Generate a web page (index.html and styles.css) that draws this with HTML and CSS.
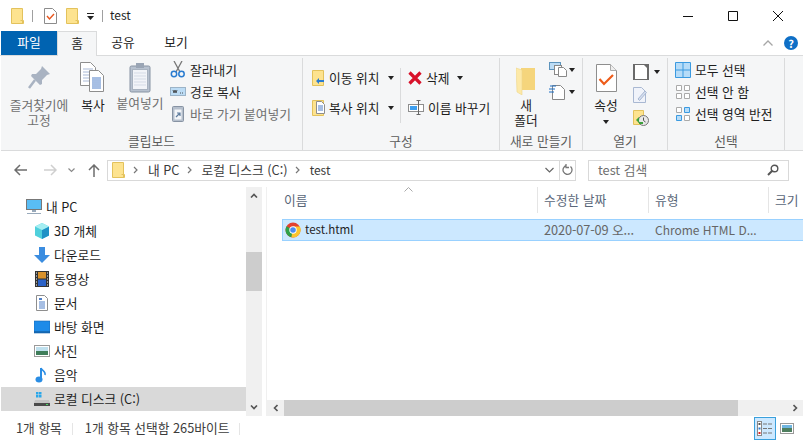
FILE: index.html
```html
<!DOCTYPE html>
<html lang="ko">
<head>
<meta charset="utf-8">
<title>test</title>
<link rel="stylesheet" href="styles.css">
</head>
<body>
<svg class="defs" width="0" height="0" aria-hidden="true">
  <defs>
    <symbol id="folder" viewBox="0 0 13 16"><path d="M.5.5h11v12h1v3H.5z" fill="#fde38f" stroke="#e3c25c"/><path d="M9.500 12.500h2v3" fill="none" stroke="#e3c25c"/></symbol>
  </defs>
</svg>
<div class="window">
  <header class="titlebar">
    <svg class="qa-folder" width="13" height="16"><use href="#folder"/></svg>
    <span class="qa-sep"></span>
    <svg class="qa-check" width="13" height="16" viewBox="0 0 13 16"><path d="M.5.5h8l4 4v11H.5z" fill="#fff" stroke="#8c8c8c"/><path d="M3 8l2.500 3L10 6" fill="none" stroke="#e8551c" stroke-width="1.400"/></svg>
    <svg class="qa-folder2" width="13" height="16"><use href="#folder"/></svg>
    <svg class="qa-drop" width="7" height="8" viewBox="0 0 7 8"><path d="M0 0h7v1H0zM0 3h7L3.500 7z" fill="#222"/></svg>
    <span class="qa-sep qa-sep2"></span>
    <span class="title-text">test</span>
    <div class="winctl">
      <svg width="12" height="12" viewBox="0 0 12 12"><path d="M1 6.500h10" stroke="#111" fill="none"/></svg>
      <svg width="12" height="12" viewBox="0 0 12 12"><path d="M1.500 1.500h9v9h-9z" stroke="#111" fill="none"/></svg>
      <svg width="12" height="12" viewBox="0 0 12 12"><path d="M1 1l10 10M11 1L1 11" stroke="#111" fill="none"/></svg>
    </div>
  </header>

  <nav class="tabs">
    <span class="tab tab-file">파일</span>
    <span class="tab tab-home">홈</span>
    <span class="tab tab-share">공유</span>
    <span class="tab tab-view">보기</span>
    <svg class="collapse" width="10" height="6" viewBox="0 0 10 6"><path d="M.5 5.500L5 1l4.500 4.500" fill="none" stroke="#a6a6a6" stroke-width="1.300"/></svg>
    <span class="help">?</span>
  </nav>

  <section class="ribbon">
    <div class="group g-clip">
      <div class="group-body">
        <div class="big b-pin">
          <svg width="26" height="34" viewBox="0 0 26 34"><path d="M16 7l8 8-3 1-5 5 0 4-2 1-9-9 1-2 4 0 5-5z" fill="#a9b3c2"/><path d="M9 21L3 29" stroke="#a9b3c2" stroke-width="2.500"/></svg>
          <span class="dim">즐겨찾기에<br>고정</span>
        </div>
        <div class="big b-copy">
          <svg width="26" height="34" viewBox="0 0 26 34"><path d="M.5 3.500h10l5 5v18H.5z" fill="#fff" stroke="#8e8e8e"/><path d="M3 10h10M3 13h10M3 16h10M3 19h10M3 22h10" stroke="#a9b9d6"/><path d="M9.500 11.500h9l5 5v16h-14z" fill="#fff" stroke="#8e8e8e"/><path d="M12 19h9M12 21h9M12 23h9M12 25h9M12 27h9M12 29h9" stroke="#4f7fc8"/></svg>
          <span>복사</span>
        </div>
        <div class="big b-paste">
          <svg width="22" height="32" viewBox="0 0 22 32"><rect x="1" y="5" width="20" height="26" rx="1.500" fill="#b7c1cf" stroke="#8793a3"/><rect x="3.500" y="8.500" width="15" height="20" fill="#f2f4f8" stroke="#a9b3c0"/><path d="M5 12h12M5 15h12M5 18h12M5 21h12M5 24h12" stroke="#d5dbe6"/><rect x="7" y="2" width="8" height="5" fill="#9aa5b5"/></svg>
          <span class="dim">붙여넣기</span>
        </div>
        <div class="small-col">
          <div class="small">
            <svg width="16" height="17" viewBox="0 0 16 17"><path d="M4 0l6 11M12 0L6 11" stroke="#777" stroke-width="1.300"/><circle cx="4" cy="13" r="2.700" fill="none" stroke="#2a7cd0" stroke-width="1.500"/><circle cx="11.500" cy="13" r="2.700" fill="none" stroke="#2a7cd0" stroke-width="1.500"/></svg>
            <span>잘라내기</span>
          </div>
          <div class="small">
            <svg width="16" height="17" viewBox="0 0 16 17"><rect x=".5" y="4.500" width="15" height="8" fill="#bcdcf5" stroke="#9cb4c8"/><path d="M3 7l1 3 1-3 1 3 1-3M10 10h1M12 10h1" stroke="#333" fill="none" stroke-width=".8"/></svg>
            <span>경로 복사</span>
          </div>
          <div class="small">
            <svg width="16" height="17" viewBox="0 0 16 17"><rect x="2.500" y="1.500" width="11" height="15" rx="1" fill="#b5bfcc" stroke="#8793a3"/><rect x="4.500" y="4.500" width="7" height="10" fill="#f3f5f8"/><path d="M6 12l4-4M7 8h3v3" stroke="#5f7d9e" fill="none" stroke-width="1.200"/></svg>
            <span class="dim">바로 가기 붙여넣기</span>
          </div>
        </div>
      </div>
      <div class="group-label">클립보드</div>
    </div>

    <div class="group g-org">
      <div class="group-body">
        <div class="org-col">
          <div class="small">
            <svg width="13" height="16" viewBox="0 0 13 16"><path d="M.5.500h11v15H.5z" fill="#fde38f" stroke="#e3c25c"/><path d="M4 11l3-3v2h5v2H7v2z" fill="#2a7cd0"/></svg>
            <span>이동 위치</span><i class="caret"></i>
          </div>
          <div class="small">
            <svg width="13" height="16" viewBox="0 0 13 16"><path d="M.5.500h11v15H.5z" fill="#fde38f" stroke="#e3c25c"/><path d="M4.500 1.500h5l3 3v9h-8z" fill="#fff" stroke="#8e8e8e"/><path d="M6 6h5M6 8h5M6 10h5" stroke="#4f7fc8"/></svg>
            <span>복사 위치</span><i class="caret"></i>
          </div>
        </div>
        <span class="org-sep"></span>
        <div class="org-col org-col2">
          <div class="small">
            <svg width="14" height="14" viewBox="0 0 14 14"><path d="M1.500 1.500l11 11M12.500 1.500l-11 11" stroke="#d8112a" stroke-width="3.200"/></svg>
            <span>삭제</span><i class="caret"></i>
          </div>
          <div class="small">
            <svg width="16" height="16" viewBox="0 0 16 16"><rect x=".5" y="4.500" width="15" height="7" fill="#fff" stroke="#8e8e8e"/><rect x="2" y="6" width="7" height="4" fill="#3e9ff0"/><path d="M10.500 0v15M8.500.5h4M8.500 14.500h4" stroke="#666" fill="none"/></svg>
            <span>이름 바꾸기</span>
          </div>
        </div>
      </div>
      <div class="group-label">구성</div>
    </div>

    <div class="group g-new">
      <div class="group-body">
        <div class="big b-new">
          <svg width="20" height="28" viewBox="0 0 20 28"><path d="M5 1h14v22H5z" fill="#f5d57c"/><path d="M0 1l6 2v25l-5-3z" fill="#fde9a8" stroke="#efd68b" stroke-width=".6"/></svg>
          <span>새<br>폴더</span>
        </div>
        <div class="new-col">
          <div class="icon-caret">
            <svg width="19" height="15" viewBox="0 0 19 15"><rect x=".5" y=".5" width="11" height="7" fill="#bcdcf5" stroke="#5c93bc"/><rect x="5.500" y="3.500" width="7" height="9" fill="#fff" stroke="#888"/><path d="M9.500 5.500h5l3 3v6h-8z" fill="#fff" stroke="#888"/></svg>
            <i class="caret"></i>
          </div>
          <div class="icon-caret">
            <svg width="19" height="16" viewBox="0 0 19 16"><path d="M3.500 1.500h8l4 4v10h-12z" fill="#fff" stroke="#888"/><path d="M1 2h6M0 5h6M0 8h5" stroke="#1d6fc4" fill="none"/></svg>
            <i class="caret"></i>
          </div>
        </div>
      </div>
      <div class="group-label">새로 만들기</div>
    </div>

    <div class="group g-open">
      <div class="group-body">
        <div class="big b-prop">
          <svg width="21" height="28" viewBox="0 0 21 28"><path d="M.5.500h14l6 6v21H.5z" fill="#fff" stroke="#8e8e8e"/><path d="M14.500.5v6h6" fill="#eee" stroke="#aaa"/><path d="M3.500 15l4.500 5 9-9" fill="none" stroke="#ee5c1a" stroke-width="2.200"/></svg>
          <span>속성</span>
          <i class="caret"></i>
        </div>
        <div class="open-col">
          <div class="icon-caret">
            <svg width="16" height="16" viewBox="0 0 16 16"><rect width="16" height="16" fill="#6a6a6a"/><path d="M2 1h9l3 3v11H2z" fill="#fff"/></svg>
            <i class="caret"></i>
          </div>
          <div class="icon-caret">
            <svg width="14" height="16" viewBox="0 0 14 16"><path d="M.5.5h8l4 4v11H.5z" fill="#f0f3fa" stroke="#a9b8d2"/><path d="M5 12l7-8 1.500 1.500-7 8z" fill="#d4deef" stroke="#a9b8d2"/></svg>
          </div>
          <div class="icon-caret">
            <svg width="16" height="16" viewBox="0 0 16 16"><path d="M.5.5h10v14H.5z" fill="#fde38f" stroke="#e3c25c"/><circle cx="10.500" cy="10.500" r="5" fill="#e8e8e8" stroke="#777"/><path d="M10.500 7.500v3l2 1.500" stroke="#555" fill="none"/><path d="M3 10l3-3v6z" fill="#3da13c"/><path d="M6 13h4" stroke="#3da13c" stroke-width="2"/></svg>
          </div>
        </div>
      </div>
      <div class="group-label">열기</div>
    </div>

    <div class="group g-sel">
      <div class="group-body">
        <div class="sel-col">
          <div class="small">
            <svg width="16" height="16" viewBox="0 0 16 16"><path d="M.5.500h15v15H.5zM8 .5v15M.5 8h15" fill="#b6dcf8" stroke="#3b9ae0"/></svg>
            <span>모두 선택</span>
          </div>
          <div class="small">
            <svg width="16" height="16" viewBox="0 0 16 16"><path d="M1.500 1.500h5v5h-5zM9.500 1.500h5v5h-5zM1.500 9.500h5v5h-5zM9.500 9.500h5v5h-5z" fill="#fff" stroke="#aaa"/></svg>
            <span>선택 안 함</span>
          </div>
          <div class="small">
            <svg width="16" height="16" viewBox="0 0 16 16"><path d="M1.500 1.500h5v5h-5zM9.500 9.500h5v5h-5z" fill="#fff" stroke="#aaa"/><path d="M9.500 1.500h5v5h-5zM1.500 9.500h5v5h-5z" fill="#b6dcf8" stroke="#3b9ae0"/></svg>
            <span>선택 영역 반전</span>
          </div>
        </div>
      </div>
      <div class="group-label">선택</div>
    </div>
  </section>

  <div class="navbar">
    <svg class="nav-back" width="13" height="12" viewBox="0 0 13 12"><path d="M6 1L1 6l5 5M1 6h12" fill="none" stroke="#6d6d6d" stroke-width="1.500"/></svg>
    <svg class="nav-fwd" width="13" height="12" viewBox="0 0 13 12"><path d="M7 1l5 5-5 5M12 6H0" fill="none" stroke="#cfcfcf" stroke-width="1.500"/></svg>
    <svg class="nav-down" width="7" height="5" viewBox="0 0 7 5"><path d="M.5.5l3 3 3-3" fill="none" stroke="#8a8a8a" stroke-width="1.200"/></svg>
    <svg class="nav-up" width="12" height="13" viewBox="0 0 12 13"><path d="M1 6l5-5 5 5M6 1v12" fill="none" stroke="#6d6d6d" stroke-width="1.500"/></svg>
    <div class="addr">
      <svg class="addr-folder" width="13" height="16"><use href="#folder"/></svg>
      <svg class="crumb-sep" width="5" height="8" viewBox="0 0 5 8"><path d="M1 1l3 3-3 3" fill="none" stroke="#777" stroke-width="1.200"/></svg><span class="crumb">내 PC</span>
      <svg class="crumb-sep" width="5" height="8" viewBox="0 0 5 8"><path d="M1 1l3 3-3 3" fill="none" stroke="#777" stroke-width="1.200"/></svg><span class="crumb">로컬 디스크 (C:)</span>
      <svg class="crumb-sep" width="5" height="8" viewBox="0 0 5 8"><path d="M1 1l3 3-3 3" fill="none" stroke="#777" stroke-width="1.200"/></svg><span class="crumb crumb-latin">test</span>
      <svg class="addr-down" width="9" height="6" viewBox="0 0 9 6"><path d="M.5 1l4 4 4-4" fill="none" stroke="#666" stroke-width="1.200"/></svg>
      <span class="addr-btn">
        <svg width="11" height="12" viewBox="0 0 11 12"><path d="M8.500 2.500a4.500 4.500 0 1 1-4-1M4 0v3.500h3" fill="none" stroke="#777" stroke-width="1.300"/></svg>
      </span>
    </div>
    <div class="search">
      <span class="search-text">test 검색</span>
      <svg width="12" height="12" viewBox="0 0 12 12"><circle cx="7.500" cy="4.500" r="3.300" fill="none" stroke="#555" stroke-width="1.400"/><path d="M5 7l-4 4" stroke="#555" stroke-width="2"/></svg>
    </div>
  </div>

  <main class="content">
    <aside class="sidebar">
      <div class="tree">
        <div class="tree-row root">
          <svg width="16" height="16" viewBox="0 0 16 16"><rect x=".5" y=".5" width="15" height="10" fill="#59bdf5" stroke="#777"/><path d="M6 11h4v2H6zM1 14h14v1H1z" fill="#9ab"/></svg>
          <span>내 PC</span>
        </div>
        <div class="tree-row">
          <svg width="16" height="16" viewBox="0 0 16 16"><path d="M8 0l7 3.500v9L8 16l-7-3.500v-9z" fill="#4fd0dc"/><path d="M8 7l7-3.500v9L8 16z" fill="#1f92c6"/><path d="M8 0l7 3.500L8 7 1 3.500z" fill="#a5eef2"/></svg>
          <span>3D 개체</span>
        </div>
        <div class="tree-row">
          <svg width="16" height="16" viewBox="0 0 16 16"><path d="M5 0h6v8h5l-8 8-8-8h5z" fill="#3b8de0"/></svg>
          <span>다운로드</span>
        </div>
        <div class="tree-row">
          <svg width="16" height="16" viewBox="0 0 16 16"><rect x="1" y="0" width="14" height="16" fill="#333"/><rect x="4" y="1" width="8" height="6.500" fill="#d9922c"/><rect x="4" y="8.500" width="8" height="6.500" fill="#2b62c7"/><path d="M2 2h1M2 5h1M2 8h1M2 11h1M2 14h1M13 2h1M13 5h1M13 8h1M13 11h1M13 14h1" stroke="#fff"/></svg>
          <span>동영상</span>
        </div>
        <div class="tree-row">
          <svg width="16" height="16" viewBox="0 0 16 16"><path d="M2.500.5h8l3 3v12h-11z" fill="#fff" stroke="#8e8e8e"/><path d="M5 7h6M5 9h6M5 11h6M5 13h6" stroke="#4f7fc8"/><rect x="5" y="3" width="3" height="2" fill="#4f7fc8"/></svg>
          <span>문서</span>
        </div>
        <div class="tree-row">
          <svg width="16" height="16" viewBox="0 0 16 16"><rect y="2" width="16" height="12" fill="#1d8be8" stroke="#1466b0" stroke-width=".6"/><path d="M0 13h16" stroke="#0f4f8a"/></svg>
          <span>바탕 화면</span>
        </div>
        <div class="tree-row">
          <svg width="16" height="16" viewBox="0 0 16 16"><rect x=".5" y="2.500" width="15" height="11" fill="#fff" stroke="#9a9a9a"/><rect x="2" y="4" width="12" height="4" fill="#bfe0ee"/><path d="M2 8h12v4H2z" fill="#3f7d5a"/></svg>
          <span>사진</span>
        </div>
        <div class="tree-row">
          <svg width="16" height="16" viewBox="0 0 16 16"><path d="M7 1v10.500" stroke="#2a8de4" stroke-width="2"/><path d="M7 1c1 3 5 3 4 7" fill="none" stroke="#2a8de4" stroke-width="1.500"/><ellipse cx="5" cy="12.500" rx="3.500" ry="3" fill="#2a8de4"/></svg>
          <span>음악</span>
        </div>
        <div class="tree-row active">
          <svg width="16" height="16" viewBox="0 0 16 16"><path d="M2 1h2.500v2.500H2zM5 1h2.500v2.500H5zM2 4h2.500v2.500H2zM5 4h2.500v2.500H5z" fill="#2aa7ea"/><path d="M1 9h14l1 3v3H0v-3z" fill="#c4c4c4"/><path d="M0 12h16v3H0z" fill="#4a4a4a"/><rect x="12" y="13" width="2" height="1" fill="#4cd964"/></svg>
          <span>로컬 디스크 (C:)</span>
        </div>
      </div>
      <div class="vscroll">
        <span class="sb-btn"><svg width="8" height="5" viewBox="0 0 8 5"><path d="M1 4.500l3-3 3 3" fill="none" stroke="#555" stroke-width="1.600"/></svg></span>
        <span class="sb-track"><span class="sb-thumb"></span></span>
        <span class="sb-btn"><svg width="8" height="5" viewBox="0 0 8 5"><path d="M1 .5l3 3 3-3" fill="none" stroke="#555" stroke-width="1.600"/></svg></span>
      </div>
    </aside>
    <section class="files">
      <div class="col-head">
        <span class="col c-name">이름<svg class="sort" width="9" height="5" viewBox="0 0 9 5"><path d="M.5 4.500l4-4 4 4" fill="none" stroke="#a9a9a9"/></svg></span>
        <span class="col c-date">수정한 날짜</span>
        <span class="col c-type">유형</span>
        <span class="col c-size">크기</span>
      </div>
      <div class="file-row">
        <span class="cell c-name">
          <svg width="16" height="16" viewBox="0 0 16 16"><circle cx="8" cy="8" r="7.500" fill="#e3412f"/><path d="M8 8L1.500 4.200A7.500 7.500 0 0 0 6.500 15.300z" fill="#2fa14a"/><path d="M8 4.500h6.800A7.500 7.500 0 0 1 6.500 15.300z" fill="#fbc62e"/><circle cx="8" cy="8" r="3.700" fill="#fff"/><circle cx="8" cy="8" r="2.800" fill="#4a8cf0"/></svg>
          <span class="file-name">test.html</span>
        </span>
        <span class="cell c-date">2020-07-09 오...</span>
        <span class="cell c-type">Chrome HTML D...</span>
      </div>
      <div class="files-empty"></div>
      <div class="hscroll">
        <span class="hb-btn"><svg width="5" height="8" viewBox="0 0 5 8"><path d="M4.500 1l-3 3 3 3" fill="none" stroke="#555" stroke-width="1.600"/></svg></span>
        <span class="hb-thumb"></span>
        <span class="hb-end"><svg width="5" height="8" viewBox="0 0 5 8"><path d="M.5 1l3 3-3 3" fill="none" stroke="#555" stroke-width="1.600"/></svg></span>
      </div>
    </section>
  </main>

  <footer class="status">
    <span class="st-count">1개 항목</span>
    <span class="st-sep"></span>
    <span class="st-sel">1개 항목 선택함 265바이트</span>
    <span class="st-sep"></span>
    <div class="views">
      <span class="view view-on"><svg width="16" height="16" viewBox="0 0 16 16"><rect x=".5" y=".5" width="4" height="14" fill="#fff" stroke="#888"/><rect x="1.500" y="2" width="2" height="2" fill="#555"/><rect x="1.500" y="6.500" width="2" height="2" fill="#2a7cd0"/><rect x="1.500" y="11" width="2" height="2" fill="#d22"/><path d="M6 3h4M11 3h4M6 7.500h4M11 7.500h4M6 12h4M11 12h4" stroke="#777"/></svg></span>
      <span class="view"><svg width="14" height="11" viewBox="0 0 14 11"><rect x=".5" y=".5" width="13" height="10" fill="#fff" stroke="#999"/><rect x="2" y="2" width="10" height="3" fill="#6fb5e0"/><rect x="2" y="5" width="10" height="4" fill="#4f7f5f"/></svg></span>
    </div>
  </footer>
</div>
</body>
</html>
```
FILE: styles.css
```css
* { box-sizing: border-box; }
html, body { margin: 0; padding: 0; background: #fff; }
body {
  font-family: "Noto Sans CJK KR", "Noto Sans", sans-serif;
  font-size: 12.75px;
  line-height: 15px;
  color: #1e1e1e;
  overflow: hidden;
}
.defs { display: block; height: 0; }
svg { display: block; flex: none; }
i { display: block; }

.window { display: flex; flex-direction: column; width: 803px; height: 441px; overflow: hidden; }

/* title bar */
.titlebar { display: flex; align-items: center; height: 31px; flex: none; padding-left: 11px; }
.qa-folder { margin-right: 8px; }
.qa-sep { width: 1px; height: 12px; background: #a0a0a0; margin-right: 11px; }
.qa-check { margin-right: 9px; }
.qa-folder2 { margin-right: 8px; }
.qa-drop { margin-right: 8px; margin-top: 2px; }
.qa-sep2 { margin-right: 7px; }
.title-text { font-size: 12px; padding-bottom: 2px; }
.winctl { display: flex; margin-left: auto; gap: 33px; padding-right: 19px; }

/* tabs */
.tabs { display: flex; align-items: stretch; height: 25px; flex: none; padding-left: 1px; border-bottom: 1px solid #dadbdc; }
.tab { display: flex; align-items: center; justify-content: center; height: 24px; padding-bottom: 3px; }
.tab-file { width: 56px; background: #0063b1; color: #fff; }
.tab-home { width: 40px; border: 1px solid #dadbdc; border-bottom: 0; height: 25px; background: #f5f6f7; z-index: 1; }
.tab-share { width: 52px; }
.tab-view { width: 54px; }
.collapse { margin: 9px 0 0 auto; }
.help { width: 14px; height: 14px; margin: 5px 5px 0 11px; border-radius: 50%; background: #0f6fc6; color: #fff; font-weight: 700; font-size: 11px; line-height: 14px; text-align: center; }

/* ribbon */
.ribbon { display: flex; height: 95px; flex: none; margin-left: 1px; background: #f5f6f7; border-bottom: 1px solid #dadbdc; }
.group { display: flex; flex-direction: column; border-right: 1px solid #dadbdc; margin: 2px 0 0; }
.group-body { display: flex; flex: 1; min-height: 0; }
.group-label { height: 14px; flex: none; text-align: center; color: #5b5b5b; line-height: 10px; }
.dim { color: #6f6f6f; }

.g-clip { width: 302px; }
.g-org { width: 197px; }
.g-new { width: 83px; }
.g-open { width: 85px; }
.g-sel { width: 117px; }

.big { display: flex; flex-direction: column; align-items: center; text-align: center; padding-top: 1px; white-space: nowrap; }
.big > svg { height: 34px; margin-bottom: 4px; }
.b-pin { width: 62px; margin-left: 7px; }
.b-copy { width: 44px; margin-left: 1px; }
.b-paste { width: 50px; }
.b-paste > svg { margin-top: 2px; margin-bottom: 2px; height: 32px; }
.small-col { display: flex; flex-direction: column; gap: 1px; padding-top: 1px; margin-left: 5px; }
.small { display: flex; align-items: center; gap: 4px; height: 21px; white-space: nowrap; }
.caret { width: 0; height: 0; border: 3.500px solid transparent; border-top: 4px solid #222; border-bottom: 0; margin-left: 4px; }

.org-col { display: flex; flex-direction: column; gap: 9px; padding: 9px 0 0 9px; width: 97px; }
.org-sep { width: 1px; height: 55px; margin-top: 10px; background: #dadbdc; }
.org-col2 { padding-left: 7px; }

.b-new { width: 44px; margin-left: 4px; padding-top: 9px; }
.b-new > svg { height: 28px; margin-bottom: 2px; }
.new-col { display: flex; flex-direction: column; gap: 7px; padding-top: 4px; margin-left: 1px; }
.icon-caret { display: flex; align-items: center; height: 15px; }
.icon-caret .caret { margin-left: 1px; }

.b-prop { width: 42px; padding-top: 6px; margin-left: 2px; }
.b-prop > svg { height: 28px; margin-bottom: 5px; }
.b-prop .caret { margin: 8px 0 0; }
.open-col { display: flex; flex-direction: column; gap: 7px; padding-top: 6px; margin-left: 6px; }
.open-col .icon-caret { height: 16px; }
.open-col .caret { margin-left: 5px; }

.sel-col { display: flex; flex-direction: column; gap: 1px; padding: 1px 0 0 7px; }
.sel-col .small { gap: 4px; }

/* navigation bar */
.navbar { display: flex; align-items: center; height: 36px; flex: none; padding-top: 2px; }
.nav-back { margin-left: 14px; }
.nav-fwd { margin-left: 17px; }
.nav-down { margin-left: 11px; }
.nav-up { margin-left: 13px; }
.addr { display: flex; align-items: center; width: 469px; height: 21px; margin-left: 7px; border: 1px solid #d9d9d9; padding-left: 4px; }
.addr-folder { margin-right: 8px; }
.crumb-sep { margin-right: 10px; }
.crumb { margin-right: 7px; color: #3a3a3a; padding-bottom: 2px; }
.crumb-latin { font-size: 12px; }
.addr-down { margin-left: auto; margin-right: 5px; }
.addr-btn { display: flex; align-items: center; justify-content: center; width: 16px; height: 19px; border-left: 1px solid #d9d9d9; }
.search { display: flex; align-items: center; justify-content: space-between; width: 201px; height: 21px; margin-left: 12px; border: 1px solid #d9d9d9; padding: 0 9px; color: #6f6f6f; }
.search-text { padding-bottom: 2px; }

/* content */
.content { display: flex; flex: 1; min-height: 0; }
.sidebar { display: flex; width: 262px; flex: none; }
.tree { width: 245px; flex: none; padding-top: 8px; margin-left: 1px; }
.tree-row { display: flex; align-items: center; gap: 4px; height: 24px; padding-left: 33px; white-space: nowrap; }
.tree-row span { padding-bottom: 2px; }
.tree-row.root { padding-left: 25px; gap: 4px; }
.tree-row.active { background: #d9d9d9; }
.vscroll { display: flex; flex-direction: column; width: 16px; flex: none; background: #f0f0f0; }
.sb-btn { display: flex; align-items: center; justify-content: center; height: 17px; flex: none; }
.sb-track { flex: 1; padding-top: 48px; }
.sb-thumb { display: block; height: 39px; background: #cdcdcd; }

.files { display: flex; flex-direction: column; flex: 1; min-width: 0; margin-left: 4px; border-left: 1px solid #f0f0f0; }
.col-head { display: flex; height: 26px; flex: none; color: #5a6779; }
.col { display: flex; align-items: center; padding: 0 0 2px 6px; border-right: 1px solid #e5e5e5; position: relative; height: 26px; white-space: nowrap; }
.col.c-name { width: 271px; padding-left: 17px; }
.col.c-date { width: 111px; }
.col.c-type { width: 120px; }
.col.c-size { flex: 1; border-right: 0; }
.sort { position: absolute; left: 137px; top: 0; }

.file-row { display: flex; align-items: center; height: 22px; flex: none; margin: 6px 0 0 15px; background: #cce8ff; border-top: 1px solid #99d1ff; border-bottom: 1px solid #99d1ff; border-left: 1px solid #99d1ff; white-space: nowrap; }
.cell { display: flex; align-items: center; }
.cell.c-name { width: 255px; gap: 4px; padding-left: 2px; }
.file-name { font-size: 11.5px; padding-bottom: 2px; }
.cell.c-date { width: 111px; padding: 0 0 2px 6px; color: #666; letter-spacing: -.1px; }
.cell.c-type { padding: 0 0 2px 6px; color: #666; font-size: 12px; }
.files-empty { flex: 1; }

.hscroll { display: flex; height: 16px; flex: none; background: #f0f0f0; }
.hb-btn { display: flex; align-items: center; justify-content: center; width: 17px; flex: none; }
.hb-thumb { width: 454px; background: #cdcdcd; }
.hb-end { display: flex; align-items: center; justify-content: flex-end; flex: 1; padding-right: 5px; }

/* status bar */
.status { display: flex; align-items: center; height: 25px; flex: none; padding: 0 0 0 16px; color: #3c3c3c; }
.st-count { margin-right: 10px; padding-bottom: 2px; }
.st-sep { width: 1px; height: 12px; background: #e5e5e5; }
.st-sel { margin: 0 10px 0 12px; padding-bottom: 2px; }
.views { display: flex; align-items: center; margin-left: auto; padding-right: 5px; }
.view { display: flex; align-items: center; justify-content: center; width: 22px; height: 23px; }
.view-on { background: #cce8ff; border: 1px solid #3aa0dc; }
```
